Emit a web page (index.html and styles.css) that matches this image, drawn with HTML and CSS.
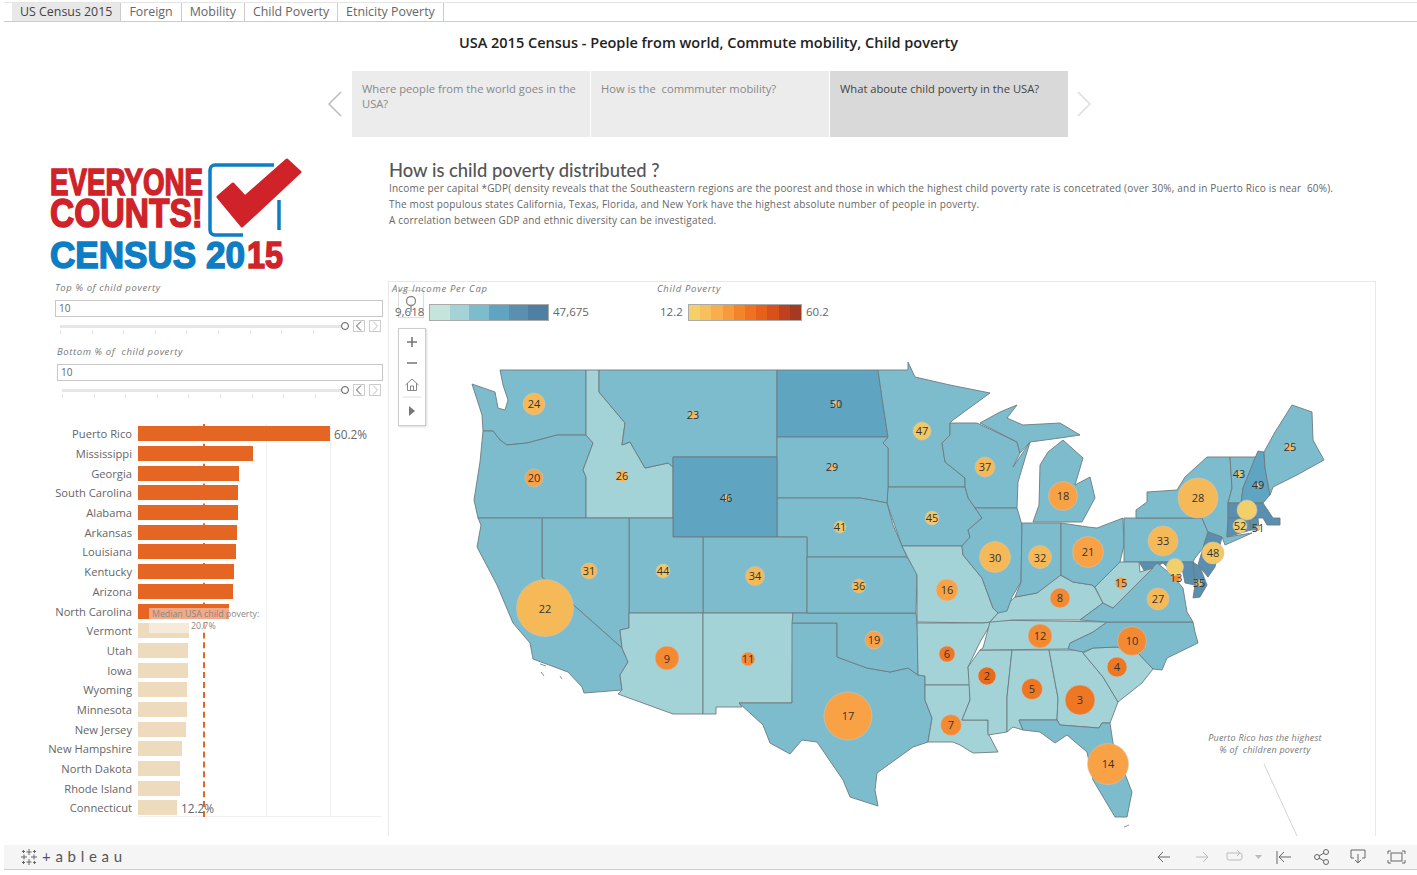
FILE: index.html
```html
<!DOCTYPE html>
<html lang="en">
<head>
    <meta charset="UTF-8">
    <title>US Census 2015</title>
    <link rel="stylesheet" href="styles.css">
</head>
<body>
    <div class="tabs">
        <div class="tab active">US Census 2015</div>
        <div class="tab">Foreign</div>
        <div class="tab">Mobility</div>
        <div class="tab">Child Poverty</div>
        <div class="tab">Etnicity Poverty</div>
    </div>

    <h1 class="title">USA 2015 Census - People from world, Commute mobility, Child poverty</h1>

    <div class="story">
        <svg class="story-arrow" width="25" height="66" viewBox="0 0 25 66"><polyline points="15,21 3,33 15,45"/></svg>
        <div class="story-point">Where people from the world goes in the USA?</div>
        <div class="story-point">How is the&nbsp; commmuter mobility?</div>
        <div class="story-point current">What aboute child poverty in the USA?</div>
        <svg class="story-arrow faded" width="25" height="66" viewBox="0 0 25 66"><polyline points="9,21 21,33 9,45"/></svg>
    </div>

    <div class="main">
        <div class="left">
            <svg class="logo" width="260" height="124" viewBox="48 157 260 124">
                <text class="logo-red" x="50" y="195" font-size="36" textLength="153" lengthAdjust="spacingAndGlyphs">EVERYONE</text>
                <text class="logo-red" x="50" y="227" font-size="41" textLength="153" lengthAdjust="spacingAndGlyphs">COUNTS!</text>
                <path class="logo-box" d="M274 165H215a5 5 0 0 0-5 5v60a5 5 0 0 0 5 5h28M279 200v30"/>
                <polygon class="logo-check" points="218,197 233,184 245,197 287,160 300,172 242,226"/>
                <text class="logo-blue" x="50" y="268" font-size="37" textLength="195" lengthAdjust="spacingAndGlyphs">CENSUS 20</text>
                <text class="logo-red" x="247" y="268" font-size="37" textLength="36" lengthAdjust="spacingAndGlyphs">15</text>
            </svg>

            <div class="filter">
                <div class="filter-label">Top % of child poverty</div>
                <div class="filter-input">10</div>
                <div class="slider">
                    <div class="track"><div class="ticks"></div></div>
                    <div class="thumb"></div>
                    <div class="step"><svg width="10" height="10" viewBox="0 0 10 10"><polyline points="7,0.500 2.500,5 7,9.500"/></svg></div>
                    <div class="step off"><svg width="10" height="10" viewBox="0 0 10 10"><polyline points="3,0.500 7.500,5 3,9.500"/></svg></div>
                </div>
            </div>

            <div class="filter second">
                <div class="filter-label">Bottom % of&nbsp; child poverty</div>
                <div class="filter-input">10</div>
                <div class="slider">
                    <div class="track"><div class="ticks"></div></div>
                    <div class="thumb"></div>
                    <div class="step"><svg width="10" height="10" viewBox="0 0 10 10"><polyline points="7,0.500 2.500,5 7,9.500"/></svg></div>
                    <div class="step off"><svg width="10" height="10" viewBox="0 0 10 10"><polyline points="3,0.500 7.500,5 3,9.500"/></svg></div>
                </div>
            </div>

            <div class="bars">
                <div class="grid-line g1"></div>
                <div class="grid-line g2"></div>
                <div class="axis"></div>
                <div class="bar-row"><span class="bar-name">Puerto Rico</span><span class="bar hot" style="width:192px"></span><span class="bar-value">60.2%</span></div>
                <div class="bar-row"><span class="bar-name">Mississippi</span><span class="bar hot" style="width:115px"></span></div>
                <div class="bar-row"><span class="bar-name">Georgia</span><span class="bar hot" style="width:101px"></span></div>
                <div class="bar-row"><span class="bar-name">South Carolina</span><span class="bar hot" style="width:100px"></span></div>
                <div class="bar-row"><span class="bar-name">Alabama</span><span class="bar hot" style="width:100px"></span></div>
                <div class="bar-row"><span class="bar-name">Arkansas</span><span class="bar hot" style="width:99px"></span></div>
                <div class="bar-row"><span class="bar-name">Louisiana</span><span class="bar hot" style="width:98px"></span></div>
                <div class="bar-row"><span class="bar-name">Kentucky</span><span class="bar hot" style="width:96px"></span></div>
                <div class="bar-row"><span class="bar-name">Arizona</span><span class="bar hot" style="width:95px"></span></div>
                <div class="bar-row"><span class="bar-name">North Carolina</span><span class="bar hot" style="width:91px"></span></div>
                <div class="bar-row"><span class="bar-name">Vermont</span><span class="bar" style="width:51px"></span></div>
                <div class="bar-row"><span class="bar-name">Utah</span><span class="bar" style="width:50px"></span></div>
                <div class="bar-row"><span class="bar-name">Iowa</span><span class="bar" style="width:50px"></span></div>
                <div class="bar-row"><span class="bar-name">Wyoming</span><span class="bar" style="width:49px"></span></div>
                <div class="bar-row"><span class="bar-name">Minnesota</span><span class="bar" style="width:49px"></span></div>
                <div class="bar-row"><span class="bar-name">New Jersey</span><span class="bar" style="width:48px"></span></div>
                <div class="bar-row"><span class="bar-name">New Hampshire</span><span class="bar" style="width:44px"></span></div>
                <div class="bar-row"><span class="bar-name">North Dakota</span><span class="bar" style="width:42px"></span></div>
                <div class="bar-row"><span class="bar-name">Rhode Island</span><span class="bar" style="width:42px"></span></div>
                <div class="bar-row"><span class="bar-name">Connecticut</span><span class="bar" style="width:39px"></span><span class="bar-value">12.2%</span></div>
                <div class="median-line"></div>
                <div class="median-note">Median USA child poverty:<br><span>20.7%</span></div>
            </div>
        </div>

        <div class="right">
            <div class="intro">
                <h2>How is child poverty distributed ?</h2>
                <p>Income per capital *GDP( density reveals that the Southeastern regions are the poorest and those in which the highest child poverty rate is concetrated (over 30%, and in Puerto Rico is near&nbsp; 60%).</p>
                <p>The most populous states California, Texas, Florida, and New York have the highest absolute number of people in poverty.</p>
                <p>A correlation between GDP and ethnic diversity can be investigated.</p>
            </div>

            <div class="pane">
                <svg class="map" width="986" height="554" viewBox="389 282 986 554">
                    <g class="states">
                        <polygon class="inc3" points="500,370 586,370 586,435 557,435 527,443 507,445 500,440 493,431 483,431 482,415 472,384 495,392 498,408 505,410 508,400 503,385 501,375"/>
                        <polygon class="inc3" points="483,431 493,431 500,440 507,445 527,443 557,435 586,435 593,443 583,470 586,477 586,518 478,518 474,500 480,462"/>
                        <polygon class="inc2" points="586,370 599,370 599,392 625,423 622,445 630,442 645,468 668,463 673,467 673,518 586,518 586,477 583,470 593,443 586,435"/>
                        <polygon class="inc3" points="599,370 777,370 777,457 673,457 673,467 668,463 645,468 630,442 622,445 625,423 599,392"/>
                        <polygon class="inc4" points="777,370 878,370 882,398 888,437 777,437"/>
                        <polygon class="inc3" points="878,370 908,370 908,362 915,377 950,385 990,393 953,420 950,423 950,435 942,443 945,462 965,478 965,487 888,487 888,448 883,443 888,437 882,398"/>
                        <polygon class="inc3" points="950,423 977,423 1017,442 1020,453 1013,467 1030,442 1018,482 1017,508 975,508 968,498 965,487 965,478 945,462 942,443 950,435"/>
                        <polygon class="inc3" points="888,487 965,487 968,498 975,508 982,518 968,530 970,537 962,546 902,546 890,512 887,503"/>
                        <polygon class="inc3" points="777,437 888,437 883,443 888,448 888,487 887,503 877,501 860,498 777,498"/>
                        <polygon class="inc3" points="777,498 860,498 877,501 887,503 893,525 902,546 907,557 807,557 807,537 777,537"/>
                        <polygon class="inc4" points="673,457 777,457 777,537 673,537"/>
                        <polygon class="inc3" points="703,537 807,537 807,613 703,613"/>
                        <polygon class="inc3" points="629,518 673,518 673,537 703,537 703,613 629,613"/>
                        <polygon class="inc3" points="542,518 629,518 629,613 629,628 620,630 622,648 542,577"/>
                        <polygon class="inc3" points="478,518 542,518 542,577 622,648 628,662 620,675 622,690 584,693 582,687 568,672 533,659 530,643 513,623 497,585 477,547 481,525"/>
                        <polygon class="inc2" points="620,630 629,628 629,613 703,613 703,714 673,714 618,694 622,690 620,675 628,662 622,648"/>
                        <polygon class="inc2" points="703,613 793,613 792,703 739,703 742,707 716,707 716,714 703,714"/>
                        <polygon class="inc3" points="792,623 837,623 837,657 867,668 890,672 908,668 918,675 925,676 925,700 932,718 928,742 913,747 877,773 875,790 878,806 850,797 843,780 817,742 802,740 790,754 770,743 763,725 739,703 792,703"/>
                        <polygon class="inc3" points="793,613 916,613 918,633 918,675 908,668 890,672 867,668 837,657 837,623 792,623"/>
                        <polygon class="inc3" points="807,557 907,557 912,565 917,573 916,613 807,613"/>
                        <polygon class="inc2" points="902,546 962,546 963,555 982,578 993,608 998,613 990,622 983,623 917,622 917,575 908,558"/>
                        <polygon class="inc2" points="917,623 983,623 992,622 980,642 968,667 970,685 925,685 925,676 918,675"/>
                        <polygon class="inc2" points="925,685 970,685 970,700 962,720 988,720 988,733 998,752 973,753 960,745 953,742 928,742 932,718 925,700"/>
                        <polygon class="inc2" points="980,650 1012,650 1007,697 1007,732 988,735 988,720 962,720 970,700 968,667"/>
                        <polygon class="inc2" points="1012,650 1049,650 1058,698 1057,720 1019,720 1023,730 1013,727 1007,732 1007,697"/>
                        <polygon class="inc2" points="1049,650 1083,650 1083,653 1103,677 1118,702 1110,723 1102,723 1099,728 1060,725 1057,720 1058,698"/>
                        <polygon class="inc3" points="1019,720 1057,720 1060,725 1099,728 1102,723 1110,723 1113,743 1132,792 1127,817 1115,817 1093,780 1087,752 1067,735 1055,743 1040,732 1023,730"/>
                        <polygon class="inc2" points="1083,653 1093,648 1117,647 1138,653 1153,669 1142,683 1118,702 1103,677"/>
                        <polygon class="inc3" points="1107,622 1193,622 1195,632 1198,643 1167,658 1162,670 1153,669 1138,653 1117,647 1093,648 1083,652 1068,649 1070,643 1093,632"/>
                        <polygon class="inc2" points="992,620 1107,622 1093,632 1070,643 1068,649 980,650 983,648 990,622"/>
                        <polygon class="inc2" points="998,613 1015,597 1037,593 1060,575 1073,582 1092,585 1095,588 1103,603 1080,620 1013,620 992,622 990,622"/>
                        <polygon class="inc3" points="975,508 1017,508 1022,525 1021,582 1012,597 1007,611 998,613 993,608 982,578 963,555 962,546 970,537 968,530 982,518"/>
                        <polygon class="inc3" points="1022,523 1061,523 1061,575 1037,593 1015,597 1021,582"/>
                        <polygon class="inc3" points="1061,523 1088,527 1097,528 1123,518 1124,545 1120,562 1095,587 1092,585 1073,582 1061,575"/>
                        <polygon class="inc3" points="1033,522 1082,522 1095,498 1090,477 1075,485 1083,458 1063,440 1048,452 1040,465 1039,505"/>
                        <polygon class="inc3" points="980,423 1017,442 1020,453 1030,442 1060,438 1080,435 1060,423 1023,425 1007,418 1017,405 1000,412"/>
                        <polygon class="inc3" points="1124,518 1136,518 1202,518 1208,532 1203,548 1195,558 1193,562 1124,562"/>
                        <polygon class="inc3" points="1136,518 1136,510 1147,502 1147,492 1177,490 1185,477 1207,457 1230,457 1232,488 1228,503 1228,518 1227,537 1252,533 1225,545 1222,537 1208,532 1202,518"/>
                        <polygon class="inc3" points="1230,457 1256,457 1243,488 1241,503 1228,503 1232,488"/>
                        <polygon class="inc4" points="1258,451 1264,452 1265,468 1270,495 1263,503 1241,503 1243,488 1255,458"/>
                        <polygon class="inc3" points="1264,452 1275,432 1292,405 1312,412 1313,440 1324,460 1297,475 1273,487 1270,495 1265,468"/>
                        <polygon class="inc5" points="1228,503 1263,503 1273,518 1280,518 1280,525 1267,525 1263,518 1228,518"/>
                        <polygon class="inc5" points="1228,518 1250,518 1251,530 1227,537"/>
                        <polygon class="inc5" points="1250,518 1258,518 1259,530 1251,530"/>
                        <polygon class="inc5" points="1208,532 1222,537 1218,553 1215,567 1208,577 1198,565 1203,548"/>
                        <polygon class="inc5" points="1193,562 1200,567 1207,585 1200,597 1193,598 1195,585"/>
                        <polygon class="inc5" points="1139,562 1193,562 1195,585 1185,583 1182,568 1172,572 1163,563 1145,572"/>
                        <polygon class="inc3" points="1080,620 1103,603 1113,608 1133,588 1143,578 1157,563 1172,575 1183,588 1187,612 1193,622 1107,622"/>
                        <polygon class="inc2" points="1120,562 1124,562 1139,562 1140,572 1153,568 1133,588 1113,608 1103,603 1095,587"/>
                    </g>
                    <path class="coast" d="M540 664l6 2M541 672l3 4M560 676l2 3M1124 827l5-2"/>

                    <g class="bubbles">
                        <circle class="r1" cx="987" cy="676" r="9"/>
                        <circle class="r2" cx="1080" cy="700" r="15"/>
                        <circle class="r2" cx="1117" cy="667" r="10"/>
                        <circle class="r2" cx="1032" cy="689" r="10.5"/>
                        <circle class="r2" cx="947" cy="654" r="8"/>
                        <circle class="r3" cx="951" cy="725" r="10.5"/>
                        <circle class="r3" cx="1060" cy="598" r="10"/>
                        <circle class="r3" cx="667" cy="658" r="12"/>
                        <circle class="r3" cx="1132" cy="641" r="14.5"/>
                        <circle class="r3" cx="748" cy="659" r="7"/>
                        <circle class="r3" cx="1040" cy="636" r="12"/>
                        <circle class="r3" cx="1176" cy="578" r="4"/>
                        <circle class="r4" cx="1108" cy="764" r="20.5"/>
                        <circle class="r4" cx="1121" cy="583" r="6"/>
                        <circle class="r4" cx="947" cy="590" r="11"/>
                        <circle class="r4" cx="848" cy="716" r="24"/>
                        <circle class="r4" cx="1063" cy="496" r="14.5"/>
                        <circle class="r4" cx="874" cy="640" r="9"/>
                        <circle class="r4" cx="534" cy="478" r="9"/>
                        <circle class="r4" cx="1088" cy="552" r="15.5"/>
                        <circle class="r5" cx="545" cy="608" r="28.5"/>
                        <circle class="r5" cx="693" cy="415" r="4"/>
                        <circle class="r5" cx="534" cy="404" r="11"/>
                        <circle class="r5" cx="1290" cy="447" r="4"/>
                        <circle class="r5" cx="622" cy="476" r="6"/>
                        <circle class="r5" cx="1158" cy="599" r="11"/>
                        <circle class="r5" cx="1198" cy="498" r="20"/>
                        <circle class="r5" cx="832" cy="467" r="3"/>
                        <circle class="r5" cx="995" cy="557" r="15.5"/>
                        <circle class="r5" cx="589" cy="571" r="8"/>
                        <circle class="r5" cx="1040" cy="557" r="11.5"/>
                        <circle class="r5" cx="1163" cy="541" r="15"/>
                        <circle class="r5" cx="755" cy="576" r="9.5"/>
                        <circle class="r5" cx="1199" cy="583" r="3"/>
                        <circle class="r5" cx="859" cy="586" r="7"/>
                        <circle class="r5" cx="985" cy="467" r="10"/>
                        <circle class="r6" cx="840" cy="527" r="6"/>
                        <circle class="r6" cx="1239" cy="474" r="3"/>
                        <circle class="r6" cx="663" cy="571" r="7"/>
                        <circle class="r6" cx="932" cy="518" r="7"/>
                        <circle class="r6" cx="726" cy="498" r="3"/>
                        <circle class="r6" cx="922" cy="431" r="9"/>
                        <circle class="r6" cx="1213" cy="553" r="11"/>
                        <circle class="r6" cx="1258" cy="485" r="2"/>
                        <circle class="r6" cx="836" cy="404" r="3"/>
                        <circle class="r7" cx="1175" cy="567" r="8.5"/>
                        <circle class="r7" cx="1247" cy="510" r="10"/>
                        <circle class="r7" cx="1258" cy="528" r="2"/>
                        <circle class="r7" cx="1240" cy="526" r="7"/>
                    </g>
                    <g class="bubble-text">
                        <text x="534" y="408">24</text><text x="534" y="482">20</text><text x="622" y="480">26</text>
                        <text x="693" y="419">23</text><text x="836" y="408">50</text><text x="726" y="502">46</text>
                        <text x="832" y="471">29</text><text x="922" y="435">47</text><text x="932" y="522">45</text>
                        <text x="840" y="531">41</text><text x="589" y="575">31</text><text x="663" y="575">44</text>
                        <text x="755" y="580">34</text><text x="859" y="590">36</text><text x="545" y="613">22</text>
                        <text x="874" y="644">19</text><text x="985" y="471">37</text><text x="1063" y="500">18</text>
                        <text x="1198" y="502">28</text><text x="1239" y="478">43</text><text x="1258" y="489">49</text>
                        <text x="1290" y="451">25</text><text x="1240" y="530">52</text><text x="1258" y="532">51</text>
                        <text x="1163" y="545">33</text><text x="1213" y="557">48</text><text x="995" y="562">30</text>
                        <text x="1040" y="562">32</text><text x="1088" y="556">21</text><text x="947" y="594">16</text>
                        <text x="1060" y="602">8</text><text x="1121" y="587">15</text><text x="1176" y="582">13</text>
                        <text x="1199" y="587">35</text><text x="1158" y="603">27</text><text x="1040" y="640">12</text>
                        <text x="1132" y="645">10</text><text x="667" y="663">9</text><text x="748" y="663">11</text>
                        <text x="947" y="658">6</text><text x="848" y="720">17</text><text x="951" y="729">7</text>
                        <text x="987" y="680">2</text><text x="1032" y="693">5</text><text x="1080" y="704">3</text>
                        <text x="1117" y="671">4</text><text x="1108" y="768">14</text>
                    </g>
                    <line class="pointer" x1="1264" y1="764" x2="1297" y2="836"/>
                </svg>

                <div class="map-search">
                    <svg width="18" height="18" viewBox="0 0 18 18"><circle cx="9" cy="7" r="4.5"/><line x1="9" y1="12" x2="9" y2="18"/></svg>
                </div>
                <div class="map-zoom">
                    <svg width="26" height="95" viewBox="0 1 26 95">
                        <path class="ctl" d="M13 9v10M8 14h10M8 35h10"/>
                        <path class="ctl-thin" d="M6.500 57l6.500-6 6.500 6M8.500 55v7.500h9V55M11.500 62.500v-4.500h3v4.500"/>
                        <line class="ctl-sep" x1="4" y1="69" x2="22" y2="69"/>
                        <polygon class="ctl-fill" points="10,78 16,83 10,88"/>
                    </svg>
                </div>

                <div class="legend income">
                    <div class="legend-title">Avg Income Per Cap</div>
                    <div class="legend-scale">
                        <span class="legend-num">9,618</span>
                        <div class="ramp blue"><i></i><i></i><i></i><i></i><i></i><i></i></div>
                        <span class="legend-num">47,675</span>
                    </div>
                </div>
                <div class="legend child">
                    <div class="legend-title">Child Poverty</div>
                    <div class="legend-scale">
                        <span class="legend-num">12.2</span>
                        <div class="ramp orange"><i></i><i></i><i></i><i></i><i></i><i></i><i></i><i></i><i></i><i></i></div>
                        <span class="legend-num">60.2</span>
                    </div>
                </div>

                <div class="map-note">Puerto Rico has the highest<br>% of&nbsp; children poverty</div>
            </div>
        </div>
    </div>

    <div class="toolbar">
        <div class="brand">
            <svg width="18" height="18" viewBox="0 0 18 18">
                <path d="M9 1v6M6.500 4h5M9 11v6M6.500 14h5M1 9h6M4 6.500v5M11 9h6M14 6.500v5M3.500 2v3M2 3.500h3M14.500 2v3M13 3.500h3M3.500 13v3M2 14.500h3M14.500 13v3M13 14.500h3"/>
            </svg>
            <span class="brand-name">+ableau</span>
        </div>
        <svg class="actions" width="262" height="24" viewBox="1152 0 262 24">
            <path d="M1158 12h12M1163 7l-5 5 5 5"/>
            <path class="off" d="M1196 12h12M1203 7l5 5-5 5"/>
            <path class="off" d="M1227 8h13a2 2 0 0 1 2 2v3a2 2 0 0 1-2 2h-11a2 2 0 0 1-2-2zM1237 5l3 3-3 3"/>
            <polygon class="off-fill" points="1255,10 1262,10 1258.500,14"/>
            <path d="M1277 6v13M1279 12h12M1284 7l-5 5 5 5"/>
            <circle cx="1317" cy="12" r="2.500"/><circle cx="1326" cy="7" r="2.500"/><circle cx="1326" cy="17" r="2.500"/>
            <path d="M1319 11l5-3M1319 13l5 3"/>
            <path d="M1354 13h-3V5h14v8h-3M1358 9v8M1355 15l3 3 3-3"/>
            <path d="M1388 9V6h3M1402 6h3v3M1405 15v3h-3M1391 18h-3v-3"/>
            <rect x="1391" y="8" width="11" height="8"/>
        </svg>
    </div>
</body>
</html>
```

FILE: styles.css
```css
body {
    margin: 0;
    height: 875px;
    overflow: hidden;
    background-color: #fff;
    font-family: "Open Sans", "Liberation Sans", sans-serif;
    color: #555;
}

/* workbook tabs */
.tabs {
    display: flex;
    height: 18px;
    margin: 2px 0 0 4px;
    padding-left: 8px;
    border-top: 1px solid #e4e4e4;
    border-bottom: 1px solid #ccc;
}

.tab {
    padding: 0 8px;
    border-right: 1px solid #ccc;
    font-size: 12.400px;
    line-height: 18px;
    color: #666;
}

.tab.active {
    background-color: #e8e8e8;
    color: #444;
}

.title {
    height: 49px;
    margin: 0;
    font-size: 14.500px;
    font-weight: 600;
    line-height: 42px;
    text-align: center;
    color: #222;
}

/* story navigation */
.story {
    display: flex;
    height: 66px;
    margin-left: 326px;
}

.story-arrow {
    flex: none;
    margin-right: 1px;
}

.story-arrow polyline {
    fill: none;
    stroke: #bbb;
    stroke-width: 1.5;
}

.story-arrow.faded polyline {
    stroke: #ddd;
}

.story-point {
    box-sizing: border-box;
    width: 238px;
    margin-right: 1px;
    padding: 10px 10px;
    background-color: #ececec;
    font-size: 11.200px;
    line-height: 15px;
    color: #888;
}

.story-point.current {
    background-color: #d9d9d9;
    color: #444;
}

.main {
    display: flex;
    height: 679px;
    margin-top: 20px;
}

.left {
    position: relative;
    box-sizing: border-box;
    width: 388px;
    padding: 0 0 0 55px;
}

.logo {
    display: block;
    margin-left: -7px;
}

.logo text {
    font-family: "Liberation Sans", sans-serif;
    font-weight: bold;
    stroke-width: 1.5;
}

.logo-red {
    fill: #cf2229;
    stroke: #cf2229;
}

.logo-blue {
    fill: #0d7dc4;
    stroke: #0d7dc4;
}

.logo-box {
    fill: none;
    stroke: #0d7dc4;
    stroke-width: 3.5;
}

.logo-check {
    fill: #cf2229;
    stroke: #cf2229;
    stroke-width: 3;
    stroke-linejoin: round;
}

/* parameter sliders */
.filter {
    width: 328px;
    height: 64px;
}

.filter.second {
    width: 326px;
    margin-left: 2px;
}

.filter-label {
    height: 13px;
    margin-bottom: 6px;
    font-size: 9.500px;
    font-style: italic;
    letter-spacing: 0.600px;
    line-height: 13px;
    color: #777;
}

.filter-input {
    box-sizing: border-box;
    height: 17px;
    padding-left: 3px;
    border: 1px solid #c8c8c8;
    font-size: 10px;
    line-height: 15px;
    color: #666;
}

.slider {
    display: flex;
    align-items: center;
    height: 14px;
    margin-top: 2px;
    padding: 0 2px 0 5px;
}

.track {
    position: relative;
    flex: 1;
    height: 3px;
    background-color: #e6e6e6;
}

.ticks {
    position: absolute;
    top: 6px;
    left: 0;
    right: 0;
    height: 3px;
    background-image: repeating-linear-gradient(90deg, #ddd 0, #ddd 1px, transparent 1px, transparent 31.6px);
}

.thumb {
    box-sizing: border-box;
    width: 8px;
    height: 8px;
    border: 1px solid #555;
    border-radius: 50%;
    background-color: #fff;
}

.step {
    box-sizing: border-box;
    width: 12px;
    height: 12px;
    margin-left: 4px;
    border: 1px solid #ccc;
}

.step svg {
    display: block;
    fill: none;
    stroke: #555;
}

.step.off svg {
    stroke: #bbb;
}

/* ranked bars */
.bars {
    position: absolute;
    top: 267px;
    left: 0;
    width: 381px;
    height: 393px;
}

.axis {
    position: absolute;
    bottom: 0;
    left: 138px;
    right: 0;
    height: 1px;
    background-color: #f0f0f0;
}

.bar-row {
    position: relative;
    display: flex;
    align-items: center;
    height: 19.7px;
}

.bar-name {
    flex: none;
    width: 132px;
    margin-right: 6px;
    font-size: 11.200px;
    text-align: right;
    color: #666;
}

.bar {
    flex: none;
    height: 15px;
    background-color: #eedbbd;
}

.bar.hot {
    background-color: #e56522;
}

.bar-value {
    margin-left: 4px;
    font-size: 11.800px;
    color: #666;
}

.grid-line {
    position: absolute;
    top: 0;
    bottom: 0;
    width: 1px;
    background-color: #f0f0f0;
}

.g1 {
    left: 266px;
}

.g2 {
    left: 330px;
}

.median-line {
    position: absolute;
    top: 0;
    bottom: 0;
    left: 203px;
    border-left: 2px dashed #e56522;
}

.median-note {
    position: absolute;
    top: 184px;
    left: 149px;
    width: 112px;
    height: 25px;
    padding-left: 3px;
    box-sizing: border-box;
    background-color: rgba(255, 255, 255, 0.45);
    font-size: 8.800px;
    line-height: 12px;
    white-space: nowrap;
    color: #888;
}

.median-note span {
    margin-left: 39px;
}

/* map pane */
.right {
    width: 988px;
}

.intro {
    box-sizing: border-box;
    height: 124px;
    padding: 4px 0 0 1px;
}

.intro h2 {
    height: 18px;
    margin: 0 0 1px;
    font-family: "Lato", "Liberation Sans", sans-serif;
    font-size: 18.400px;
    font-weight: 500;
    line-height: 18px;
    color: #555;
}

.intro p {
    height: 16px;
    margin: 0;
    font-size: 10px;
    letter-spacing: 0.190px;
    line-height: 16px;
    white-space: nowrap;
    color: #666;
}

.pane {
    position: relative;
    box-sizing: border-box;
    height: 555px;
    border: 1px solid #e8e8e8;
    border-bottom: none;
}

.map {
    display: block;
}

.states polygon {
    stroke: #6d7a80;
    stroke-width: 0.9;
    stroke-linejoin: round;
}

.inc2 {
    fill: #a3d3d7;
}

.inc3 {
    fill: #7dbccc;
}

.inc4 {
    fill: #5fa4c0;
}

.inc5 {
    fill: #5b8fb0;
}

.coast {
    fill: none;
    stroke: #8a979b;
}

.bubbles circle {
    stroke: rgba(200, 200, 200, 0.7);
    stroke-width: 0.8;
}

.r1 {
    fill: #ea6a1c;
}

.r2 {
    fill: #ef7622;
}

.r3 {
    fill: #f38a32;
}

.r4 {
    fill: #f9a245;
}

.r5 {
    fill: #f6b957;
}

.r6 {
    fill: #f3c863;
}

.r7 {
    fill: #f1d06c;
}

.bubble-text text {
    font-size: 11px;
    text-anchor: middle;
    fill: #333;
}

.pointer {
    stroke: #d4d4d4;
}

.legend {
    position: absolute;
    top: 0;
    font-size: 11.500px;
}

.legend.income {
    left: 3px;
}

.legend.child {
    left: 268px;
}

.legend-title {
    height: 13px;
    font-size: 9.500px;
    font-style: italic;
    letter-spacing: 0.700px;
    line-height: 13px;
    color: #777;
}

.legend-scale {
    display: flex;
    align-items: center;
    gap: 4px;
    height: 17px;
    margin-top: 9px;
    margin-left: 3px;
    color: #666;
}

.legend-num {
    margin-top: -3px;
}

.income .legend-num:first-child {
    width: 30px;
}

.child .legend-num:first-child {
    width: 24px;
}

.ramp {
    display: flex;
    box-sizing: border-box;
    height: 17px;
    border: 1px solid #aaa;
}

.ramp i {
    display: block;
    flex: 1;
}

.ramp.blue {
    width: 120px;
}

.ramp.orange {
    width: 114px;
}

.blue i:nth-child(1) { background-color: #c5e5dc; }
.blue i:nth-child(2) { background-color: #a3d3d7; }
.blue i:nth-child(3) { background-color: #7dbccc; }
.blue i:nth-child(4) { background-color: #5fa4c0; }
.blue i:nth-child(5) { background-color: #5b8fb0; }
.blue i:nth-child(6) { background-color: #4f7fa3; }

.orange i:nth-child(1) { background-color: #f5cf6a; }
.orange i:nth-child(2) { background-color: #f8c05c; }
.orange i:nth-child(3) { background-color: #f9ad4d; }
.orange i:nth-child(4) { background-color: #f79a3c; }
.orange i:nth-child(5) { background-color: #f38528; }
.orange i:nth-child(6) { background-color: #ee7220; }
.orange i:nth-child(7) { background-color: #e9601a; }
.orange i:nth-child(8) { background-color: #d9501a; }
.orange i:nth-child(9) { background-color: #c04020; }
.orange i:nth-child(10) { background-color: #a63a20; }

.map-search {
    position: absolute;
    top: 8px;
    left: 9px;
    box-sizing: border-box;
    width: 26px;
    height: 28px;
    padding: 3px 3px 0;
    border: 1px solid #ddd;
    background-color: rgba(255, 255, 255, 0.3);
}

.map-search svg {
    fill: none;
    stroke: #888;
    stroke-width: 1.3;
}

.map-zoom {
    position: absolute;
    top: 46px;
    left: 9px;
    width: 26px;
    height: 96px;
    border: 1px solid #ccc;
    background-color: #fff;
    box-shadow: 1px 1px 2px rgba(0, 0, 0, 0.15);
}

.ctl {
    fill: none;
    stroke: #777;
    stroke-width: 1.6;
}

.ctl-thin {
    fill: none;
    stroke: #888;
}

.ctl-sep {
    stroke: #ddd;
}

.ctl-fill {
    fill: #777;
}

.map-note {
    position: absolute;
    top: 450px;
    left: 806px;
    width: 140px;
    font-size: 9px;
    font-style: italic;
    letter-spacing: 0.220px;
    line-height: 12px;
    text-align: center;
    white-space: nowrap;
    color: #777;
}

/* bottom toolbar */
.toolbar {
    display: flex;
    align-items: center;
    justify-content: space-between;
    height: 24px;
    margin: 9px 0 0 4px;
    padding: 0 3px 0 16px;
    border-bottom: 1px solid #ccc;
    background-color: #f5f5f5;
}

.brand {
    display: flex;
    align-items: center;
    gap: 4px;
}

.brand svg {
    fill: none;
    stroke: #666;
}

.brand-name {
    margin-top: -2px;
    font-family: "Lato", "Liberation Sans", sans-serif;
    font-size: 15px;
    letter-spacing: 4.700px;
    color: #555;
}

.actions {
    fill: none;
    stroke: #666;
}

.actions .off {
    stroke: #bbb;
}

.actions .off-fill {
    fill: #bbb;
    stroke: none;
}
```
